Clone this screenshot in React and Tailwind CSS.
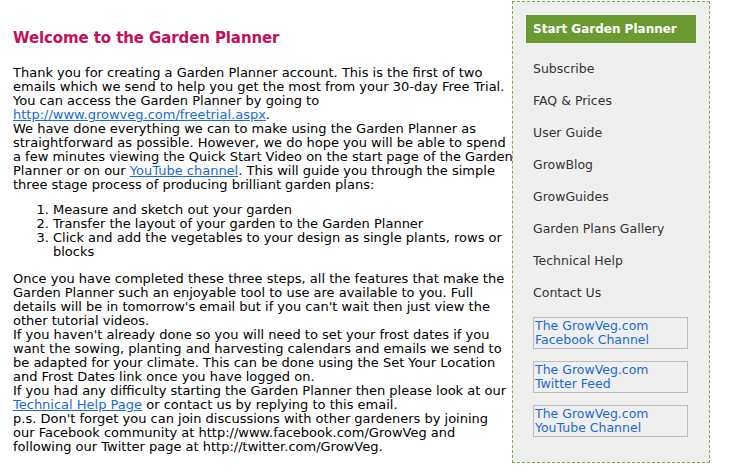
import React from 'react';

const navItems = [
  'Subscribe',
  'FAQ & Prices',
  'User Guide',
  'GrowBlog',
  'GrowGuides',
  'Garden Plans Gallery',
  'Technical Help',
  'Contact Us',
];

const channels = [
  ['The GrowVeg.com', 'Facebook Channel'],
  ['The GrowVeg.com', 'Twitter Feed'],
  ['The GrowVeg.com', 'YouTube Channel'],
];

const linkCls = 'text-[#1a6ad4] underline';

const App = () => {
  return (
    <div className="w-[740px] h-[473px] bg-white flex font-['DejaVu_Sans',Verdana,sans-serif] text-black overflow-hidden">
      <div className="w-[495px] shrink-0 ml-[13px] text-[13px] leading-[14px] whitespace-nowrap">
        <h1 className="mt-[29px] text-[15px] leading-[18px] font-bold tracking-[-0.1px] text-[#c4105a]">
          Welcome to the Garden Planner
        </h1>
        <p className="mt-[19px]">
          Thank you for creating a Garden Planner account. This is the first of two<br />
          emails which we send to help you get the most from your 30-day Free Trial.<br />
          You can access the Garden Planner by going to<br />
          <a className={linkCls}>http://www.growveg.com/freetrial.aspx</a>.
          <br />
          We have done everything we can to make using the Garden Planner as<br />
          straightforward as possible. However, we do hope you will be able to spend<br />
          a few minutes viewing the Quick Start Video on the start page of the Garden<br />
          Planner or on our <a className={linkCls}>YouTube channel</a>. This will guide you through the simple<br />
          three stage process of producing brilliant garden plans:
        </p>
        <ol className="list-decimal pl-[40px] mt-[11px] mb-[13px]">
          <li>Measure and sketch out your garden</li>
          <li>Transfer the layout of your garden to the Garden Planner</li>
          <li>Click and add the vegetables to your design as single plants, rows or<br />blocks</li>
        </ol>
        <p>
          Once you have completed these three steps, all the features that make the<br />
          Garden Planner such an enjoyable tool to use are available to you. Full<br />
          details will be in tomorrow's email but if you can't wait then just view the<br />
          other tutorial videos.
          <br />
          If you haven't already done so you will need to set your frost dates if you<br />
          want the sowing, planting and harvesting calendars and emails we send to<br />
          be adapted for your climate. This can be done using the Set Your Location<br />
          and Frost Dates link once you have logged on.
          <br />
          If you had any difficulty starting the Garden Planner then please look at our<br />
          <a className={linkCls}>Technical Help Page</a> or contact us by replying to this email.
          <br />
          p.s. Don't forget you can join discussions with other gardeners by joining<br />
          our Facebook community at http://www.facebook.com/GrowVeg and<br />
          following our Twitter page at http://twitter.com/GrowVeg.
        </p>
      </div>
      <div className="ml-[4px] mt-px w-[198px] h-[462px] shrink-0 border border-dashed border-[#7fae3c] bg-[#efefef] px-[13px] pt-[13px]">
        <div className="h-[28px] bg-[#6a9a32] text-white font-bold text-[12px] flex items-center pl-[7px]">
          Start Garden Planner
        </div>
        <ul className="mt-[10px] text-[12.5px] text-[#333]">
          {navItems.map((item) => (
            <li key={item} className="h-[32px] flex items-center pl-[7px]">
              {item}
            </li>
          ))}
        </ul>
        <div className="mt-[8px] flex flex-col gap-[12px] pl-[7px]">
          {channels.map(([a, b]) => (
            <div key={b} className="w-[155px] h-[32px] border border-[#bdbdbd] text-[#1a6ad4] text-[12.5px] leading-[14px] px-[1px] pt-px">
              {a}
              <br />
              {b}
            </div>
          ))}
        </div>
      </div>
    </div>
  );
};

export default App;
